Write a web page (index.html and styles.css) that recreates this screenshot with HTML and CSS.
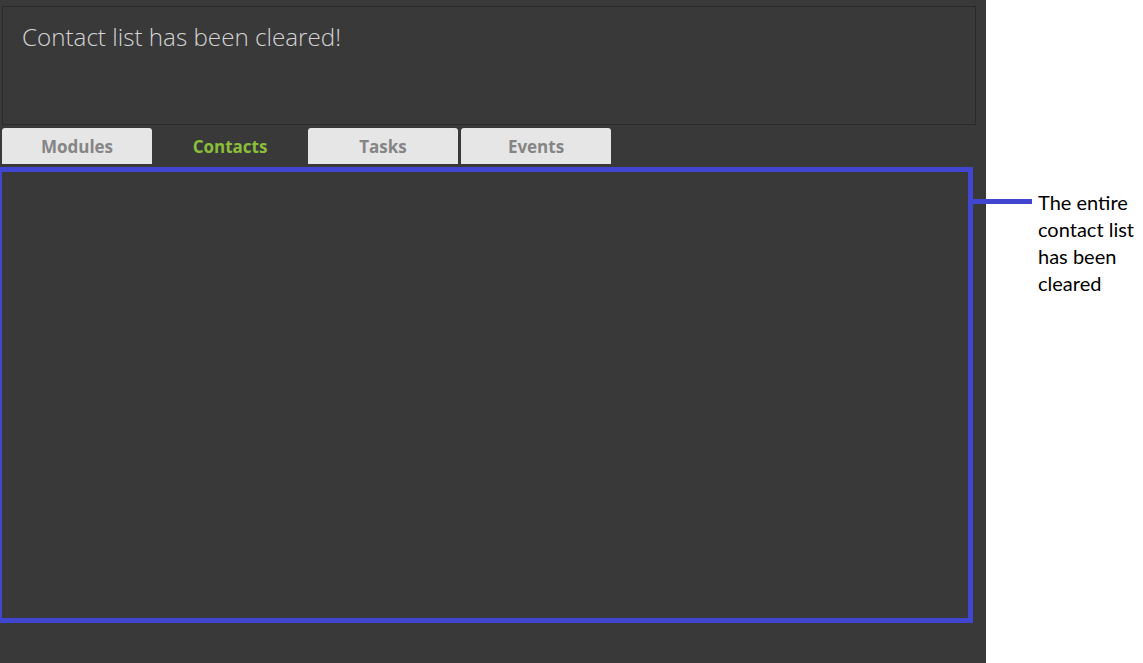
FILE: index.html
```html
<!DOCTYPE html>
<html>
<head>
<meta charset="utf-8">
<link rel="stylesheet" href="styles.css">
</head>
<body>
<div class="page">
  <div class="app">
    <div class="result">Contact list has been cleared!</div>
    <div class="tabs">
      <div class="tab">Modules</div>
      <div class="tab active">Contacts</div>
      <div class="tab">Tasks</div>
      <div class="tab">Events</div>
    </div>
    <div class="list"></div>
    <div class="highlight"></div>
    <div class="connector"></div>
  </div>
  <div class="note">The entire contact list has been cleared</div>
</div>
</body>
</html>
```
FILE: styles.css
```css
html, body {
  margin: 0;
  padding: 0;
  background: #ffffff;
}
.page {
  display: flex;
  width: 1143px;
  height: 663px;
  overflow: hidden;
}
.app {
  position: relative;
  width: 986px;
  height: 663px;
  background: #393939;
  display: flex;
  flex-direction: column;
  flex: none;
}
.result {
  margin: 6px 10px 0 2px;
  height: 119px;
  border: 1px solid #2a2a2a;
  color: #d4d4d4;
  font-family: "Open Sans", sans-serif;
  font-weight: 300;
  font-size: 24.2px;
  padding: 13px 0 0 19px;
  box-sizing: border-box;
  letter-spacing: 0;
}
.tabs {
  display: flex;
  gap: 3px;
  margin: 3px 0 0 2px;
  height: 36px;
}
.tab {
  width: 150px;
  background: #e6e6e6;
  border-radius: 3px 3px 0 0;
  color: #858585;
  font-family: "Open Sans", sans-serif;
  font-weight: 700;
  font-size: 17px;
  display: flex;
  align-items: center;
  justify-content: center;
  box-sizing: border-box;
}
.tab.active {
  background: #393939;
  color: #8bbf3a;
}
.list {
  flex: 1;
}
.highlight {
  position: absolute;
  left: -3px;
  top: 167px;
  width: 976px;
  height: 456px;
  border: 5px solid #4146d1;
  box-sizing: border-box;
}
.connector {
  position: absolute;
  left: 973px;
  top: 199px;
  width: 59px;
  height: 5px;
  background: #4146d1;
}
.note {
  margin: 189px 0 0 52px;
  width: 105px;
  font-family: "Lato", sans-serif;
  font-size: 20px;
  line-height: 27px;
  color: #000;
}
```
